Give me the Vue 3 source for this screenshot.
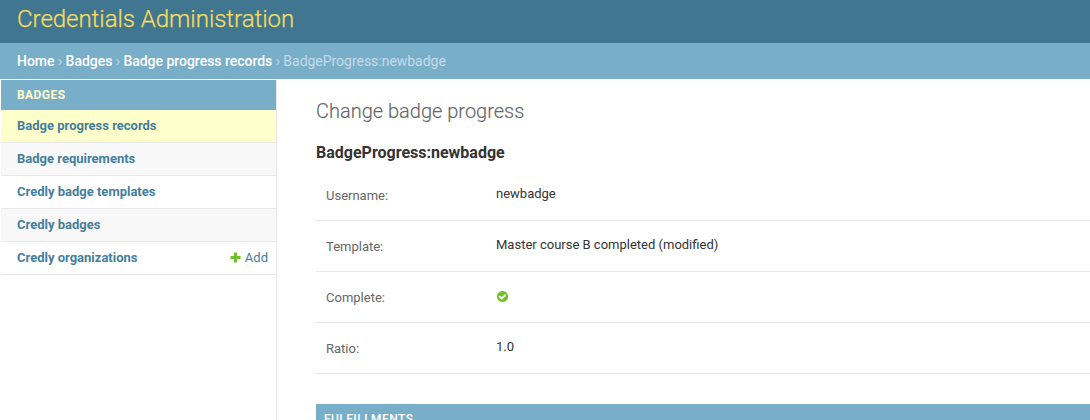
<script setup>
const items = [
  { name: 'Badge progress records', current: true },
  { name: 'Badge requirements' },
  { name: 'Credly badge templates' },
  { name: 'Credly badges' },
  { name: 'Credly organizations', add: true },
]
const rows = [
  { label: 'Username:', value: 'newbadge' },
  { label: 'Template:', value: 'Master course B completed (modified)' },
  { label: 'Complete:', icon: true },
  { label: 'Ratio:', value: '1.0' },
]
</script>

<template>
  <div class="page">
    <header class="header"><h1>Credentials Administration</h1></header>
    <nav class="crumbs">
      <a>Home</a> › <a>Badges</a> › <a>Badge progress records</a> › BadgeProgress:newbadge
    </nav>
    <div class="main">
      <aside class="sidebar">
        <div class="caption">BADGES</div>
        <div v-for="i in items" :key="i.name" class="item" :class="{ current: i.current }">
          <a class="name">{{ i.name }}</a>
          <a v-if="i.add" class="add">
            <svg width="11" height="11" viewBox="0 0 11 11"><path fill="#70bf2b" d="M4 0.5h3v3.5h3.5v3H7v3.5H4V7H0.5V4H4z" /></svg>
            <span>Add</span>
          </a>
        </div>
      </aside>
      <main class="content">
        <h2 class="title">Change badge progress</h2>
        <h3 class="object">BadgeProgress:newbadge</h3>
        <div v-for="r in rows" :key="r.label" class="row">
          <span class="label">{{ r.label }}</span>
          <svg v-if="r.icon" class="yes" width="13" height="13" viewBox="0 0 1792 1792"><path fill="#70bf2b" d="M1412 734q0-28-18-46l-91-90q-19-19-45-19t-45 19l-408 407-226-226q-19-19-45-19t-45 19l-91 90q-18 18-18 46 0 27 18 45l362 362q19 19 45 19 27 0 46-19l543-543q18-18 18-45zm252 162q0 209-103 385.500t-279.500 279.500-385.500 103-385.500-103-279.500-279.500-103-385.500 103-385.500 279.500-279.500 385.500-103 385.500 103 279.500 279.500 103 385.500z" /></svg>
          <span v-else class="value">{{ r.value }}</span>
        </div>
        <div class="section">FULFILLMENTS</div>
      </main>
    </div>
  </div>
</template>

<style>
body { margin: 0; overflow: hidden; }
</style>
<style scoped>
.page { height: 420px; overflow: hidden; display: flex; flex-direction: column; background: #fff; color: #333; font: 13px/20px Roboto, sans-serif; }
.header { height: 43px; flex: none; box-sizing: border-box; padding: 3px 17px 0; background: #417690; }
h1 { margin: 0; font-size: 24px; line-height: 32px; font-weight: 300; letter-spacing: -0.03px; color: #f5dd5d; -webkit-text-stroke: 0.25px #f5dd5d; }
.crumbs { height: 36px; flex: none; box-sizing: border-box; padding: 8px 17px 0; background: #79aec8; color: #c4dce8; font-size: 14px; letter-spacing: -0.025px; }
.crumbs a { color: #fff; font-weight: 500; }
.main { display: flex; flex: 1; min-height: 0; }
.sidebar { width: 277px; flex: none; box-sizing: border-box; padding: 1px 0 0 1px; border-right: 1px solid #e8e8e8; }
.caption { height: 30px; box-sizing: border-box; padding: 5px 16px; background: #79aec8; color: #ffc; font-size: 12px; font-weight: 700; letter-spacing: 0.45px; }
.item { height: 33px; box-sizing: border-box; display: flex; justify-content: space-between; align-items: center; padding: 0 8px 0 16px; border-bottom: 1px solid #e8e8e8; color: #447e9b; }
.item:nth-child(odd) { background: #f8f8f8; }
.item.current { background: #ffc; }
.name { font-weight: 700; color: #447e9b; }
.add { display: flex; align-items: center; gap: 4px; }
.add svg { margin-bottom: 1px; }
.content { flex: 1; min-width: 0; padding: 19px 0 0 39px; }
.title { margin: 0; font-size: 20px; line-height: 26px; font-weight: 300; color: #666; -webkit-text-stroke: 0.15px #666; }
.object { margin: 18px 0 6px; font-size: 16px; line-height: 22px; font-weight: 700; color: #333; }
.row { height: 51px; box-sizing: border-box; display: flex; padding: 13px 10px; border-bottom: 1px solid #e8e8e8; }
.label { width: 170px; flex: none; padding-top: 3px; color: #666; }
.value { padding-top: 1px; }
.yes { margin-top: 5px; }
.section { height: 30px; margin-top: 30px; padding: 5px 8px; background: #79aec8; color: #fff; font-size: 12px; font-weight: 500; letter-spacing: 0.45px; }
</style>
